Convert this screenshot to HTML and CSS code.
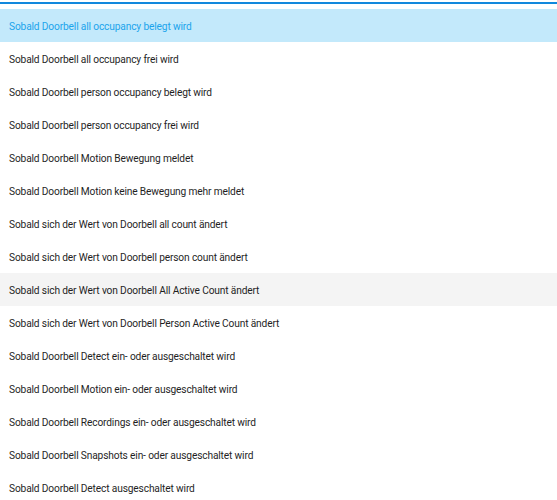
FILE: index.html
```html
<!DOCTYPE html>
<html lang="de">
<head>
<meta charset="utf-8">
<link rel="stylesheet" href="styles.css">
</head>
<body>
<div class="menu">
  <ul class="list">
    <li class="item selected">Sobald Doorbell all occupancy belegt wird</li>
    <li class="item">Sobald Doorbell all occupancy frei wird</li>
    <li class="item">Sobald Doorbell person occupancy belegt wird</li>
    <li class="item">Sobald Doorbell person occupancy frei wird</li>
    <li class="item">Sobald Doorbell Motion Bewegung meldet</li>
    <li class="item">Sobald Doorbell Motion keine Bewegung mehr meldet</li>
    <li class="item">Sobald sich der Wert von Doorbell all count ändert</li>
    <li class="item">Sobald sich der Wert von Doorbell person count ändert</li>
    <li class="item hover">Sobald sich der Wert von Doorbell All Active Count ändert</li>
    <li class="item">Sobald sich der Wert von Doorbell Person Active Count ändert</li>
    <li class="item">Sobald Doorbell Detect ein- oder ausgeschaltet wird</li>
    <li class="item">Sobald Doorbell Motion ein- oder ausgeschaltet wird</li>
    <li class="item">Sobald Doorbell Recordings ein- oder ausgeschaltet wird</li>
    <li class="item">Sobald Doorbell Snapshots ein- oder ausgeschaltet wird</li>
    <li class="item">Sobald Doorbell Detect ausgeschaltet wird</li>
  </ul>
</div>
</body>
</html>
```
FILE: styles.css
```css
html, body {
  margin: 0;
  padding: 0;
  background: #ffffff;
}
body {
  font-family: Roboto, "Noto Sans", sans-serif;
  font-size: 10.2px;
  letter-spacing: -0.15px;
  color: #1f1f1f;
}
.menu {
  margin-top: 2px;
  border-top: 2px solid #1188dd;
  padding-top: 5px;
}
.list {
  list-style: none;
  margin: 0;
  padding: 0;
}
.item {
  height: 33px;
  box-sizing: border-box;
  padding: 1px 9px 0;
  display: flex;
  align-items: center;
  white-space: nowrap;
}
.item.selected {
  background: #c3e9fb;
  color: #1ba4ec;
}
.item.hover {
  background: #f4f4f4;
}
```
